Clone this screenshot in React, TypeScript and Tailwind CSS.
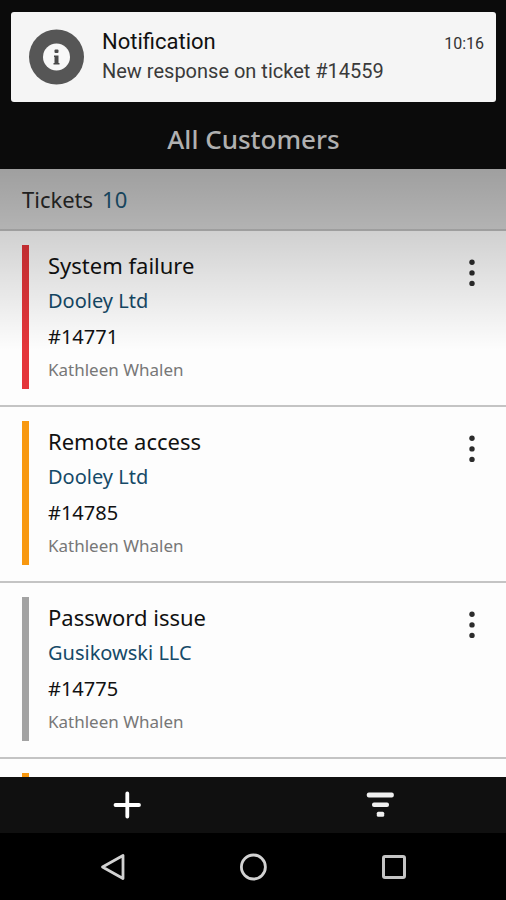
import React from 'react';

interface Ticket {
  id: string;
  title: string;
  company: string;
  assignee: string;
  barClass: string;
}

const tickets: Ticket[] = [
  { id: '14771', title: 'System failure', company: 'Dooley Ltd', assignee: 'Kathleen Whalen', barClass: 'bg-[#e4353a]' },
  { id: '14785', title: 'Remote access', company: 'Dooley Ltd', assignee: 'Kathleen Whalen', barClass: 'bg-[#f8980f]' },
  { id: '14775', title: 'Password issue', company: 'Gusikowski LLC', assignee: 'Kathleen Whalen', barClass: 'bg-[#a3a3a3]' },
  { id: '14790', title: '', company: '', assignee: '', barClass: 'bg-[#f8980f]' },
];

const NotificationCard: React.FC = () => (
  <div className="flex h-[90px] items-start rounded-[3px] bg-[#f5f5f5] pl-[17px] pr-3 font-['Roboto',sans-serif]">
    <svg viewBox="0 0 56 56" className="mt-[17px] size-14 shrink-0" aria-hidden="true">
      <circle cx="28.5" cy="28" r="27.5" fill="#565656" />
      <circle cx="28.5" cy="28" r="13.5" fill="#f8f8f8" />
      <rect x="26.5" y="20.5" width="4" height="3.5" rx="1" fill="#4a4a4a" />
      <path d="M26 26.5h4.5v7.5h1v1.5h-6v-1.5h1v-6H26z" fill="#4a4a4a" />
    </svg>
    <div className="ml-[18px] flex-1 pt-4">
      <div className="flex items-center justify-between">
        <h2 className="text-[22px] leading-7 text-[#111]">Notification</h2>
        <time className="pt-1 text-base leading-6 text-[#333]">10:16</time>
      </div>
      <p className="text-xl leading-[30px] text-[#3a3a3a]">New response on ticket #14559</p>
    </div>
  </div>
);

const TicketRow: React.FC<{ ticket: Ticket }> = ({ ticket }) => (
  <li className="flex h-[176px] shrink-0 border-b-2 border-[#c4c4c4] pl-[22px] pr-6 pt-[14px]">
    <div className={`h-36 w-[7px] shrink-0 ${ticket.barClass}`} />
    {ticket.title && (
      <>
        <div className="ml-[19px] flex-1 pt-[2px]">
          <h3 className="text-[22px] leading-9 text-[#111]">{ticket.title}</h3>
          <a href="#" className="block text-xl leading-9 text-[#164a68]">{ticket.company}</a>
          <p className="text-xl leading-9 text-[#111]">#{ticket.id}</p>
          <p className="text-[17px] leading-[30px] text-[#777]">{ticket.assignee}</p>
        </div>
        <button type="button" aria-label="Ticket options" className="mt-3 h-8 w-5">
          <svg viewBox="0 0 20 32" className="h-8 w-5" fill="#2c2c2c">
            <circle cx="10" cy="5.2" r="2.7" />
            <circle cx="10" cy="15.9" r="2.7" />
            <circle cx="10" cy="26.4" r="2.7" />
          </svg>
        </button>
      </>
    )}
  </li>
);

const ActionBar: React.FC = () => (
  <div className="grid h-14 shrink-0 grid-cols-2 bg-[#101010]">
    <button type="button" aria-label="Add ticket" className="flex items-center justify-center">
      <svg viewBox="0 0 28 28" className="size-7" stroke="#fff" strokeWidth="3.8" strokeLinecap="round">
        <path d="M14.3 2.5v23M2.5 14h23.5" />
      </svg>
    </button>
    <button type="button" aria-label="Filter tickets" className="flex items-center justify-center">
      <svg viewBox="0 0 28 28" className="size-7" fill="#efefef">
        <rect x="0.8" y="1.6" width="27" height="4.8" rx="2" />
        <rect x="6" y="11.6" width="17" height="4.4" rx="2" />
        <rect x="10.8" y="20.8" width="7.4" height="5" rx="1.5" />
      </svg>
    </button>
  </div>
);

const SystemNav: React.FC = () => (
  <nav className="flex h-[67px] shrink-0 items-center justify-center gap-28 bg-black">
    <button type="button" aria-label="Back">
      <svg viewBox="0 0 28 28" className="size-7" fill="none" stroke="#d2d2d2" strokeWidth="2.8" strokeLinejoin="round">
        <path d="M24 2.5v23L3.5 14z" />
      </svg>
    </button>
    <button type="button" aria-label="Home">
      <svg viewBox="0 0 28 28" className="size-7" fill="none" stroke="#d2d2d2" strokeWidth="2.8">
        <circle cx="14.4" cy="14" r="12" />
      </svg>
    </button>
    <button type="button" aria-label="Recent apps">
      <svg viewBox="0 0 28 28" className="size-7" fill="none" stroke="#c4c4c4" strokeWidth="3">
        <rect x="4.5" y="3.5" width="21" height="21" rx="1.5" />
      </svg>
    </button>
  </nav>
);

const App: React.FC = () => {
  return (
    <div className="flex h-screen flex-col overflow-hidden bg-[#fdfdfd] font-['Noto_Sans',sans-serif]">
      <header className="shrink-0 bg-[#0b0b0b] pb-[10px] pl-[11px] pr-[10px] pt-3">
        <NotificationCard />
        <h1 className="mt-[18px] text-center text-[26px] leading-[39px] font-medium text-[#b0b0b0]">All Customers</h1>
      </header>

      <main className="relative flex min-h-0 flex-1 flex-col overflow-hidden">
        <div className="flex h-[62px] shrink-0 items-center gap-[9px] border-b-2 border-[#c0c0c0] bg-[#dadada] pl-[22px] text-[22px]">
          <span className="text-[#2a2a2a]">Tickets</span>
          <span className="text-[#1d5877]">10</span>
        </div>
        <ul className="flex flex-col">
          {tickets.map(ticket => (
            <TicketRow key={ticket.id} ticket={ticket} />
          ))}
        </ul>
        {/* Shade falling from the notification */}
        <div className="pointer-events-none absolute inset-x-0 top-0 h-[181px] bg-linear-to-b from-black/27 to-transparent" />
      </main>

      <ActionBar />
      <SystemNav />
    </div>
  );
};

export default App;
